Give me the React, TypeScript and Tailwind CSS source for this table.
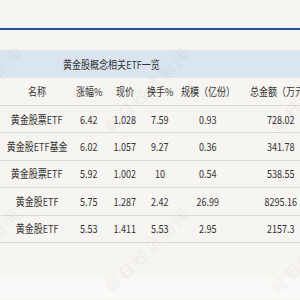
import React from "react";

const cols = [74, 30, 42, 28, 68, 78];

const header = ["名称", "涨幅%", "现价", "换手%", "规模（亿份）", "总金额（万元）"];

const rows = [
  ["黄金股票ETF", "6.42", "1.028", "7.59", "0.93", "728.02"],
  ["黄金股ETF基金", "6.02", "1.057", "9.27", "0.36", "341.78"],
  ["黄金股票ETF", "5.92", "1.002", "10", "0.54", "538.55"],
  ["黄金股ETF", "5.75", "1.287", "2.42", "26.99", "8295.16"],
  ["黄金股ETF", "5.53", "1.411", "5.53", "2.95", "2157.3"],
];

// faint diagonal watermark, tiled
const marks = [
  { x: -20, y: 88 },
  { x: 147, y: 89 },
  { x: 313, y: 88 },
  { x: -22, y: 250 },
  { x: 147, y: 249 },
  { x: 313, y: 250 },
];

const Cells = ({ cells }: { cells: string[] }) => (
  <>
    {cells.map((c, i) => (
      <div key={i} className="shrink-0 flex justify-center whitespace-nowrap" style={{ width: cols[i] }}>
        <span className="inline-block scale-x-[0.82]">{c}</span>
      </div>
    ))}
  </>
);

export default function App() {
  return (
    <div
      className="relative w-[300px] h-[300px] overflow-hidden bg-[#f7f5f1] text-[11px] leading-none text-[#333]"
      style={{ fontFamily: '"Noto Sans CJK SC", "Noto Sans", sans-serif' }}
    >
      <div className="h-[28px]" />
      <div className="h-[2px] bg-[#2452a0]" />
      <div className="h-[20px]" />
      <div className="h-[28px] bg-[#dae5ef] flex items-center">
        <span className="inline-block origin-left scale-x-[0.82] ml-[63px] whitespace-nowrap">
          黄金股概念相关ETF一览
        </span>
      </div>
      <div className="flex h-[28px] items-center border-b border-[#dcdad6]">
        <Cells cells={header} />
      </div>
      {rows.map((r, i) => (
        <div key={i} className="flex h-[27.4px] items-center border-b border-[#dcdad6]">
          <Cells cells={r} />
        </div>
      ))}
      <div className="h-[35px]" />
      <div className="h-[20px] bg-[#fbf9f7]" />

      {marks.map((m, i) => (
        <span
          key={i}
          className="pointer-events-none absolute -translate-x-1/2 -translate-y-1/2 -rotate-45 whitespace-nowrap text-[16px] font-bold tracking-[3px] text-black/[0.045]"
          style={{ left: m.x, top: m.y, fontFamily: '"Noto Sans CJK SC", serif' }}
        >
          每日经济新闻
        </span>
      ))}
    </div>
  );
}
